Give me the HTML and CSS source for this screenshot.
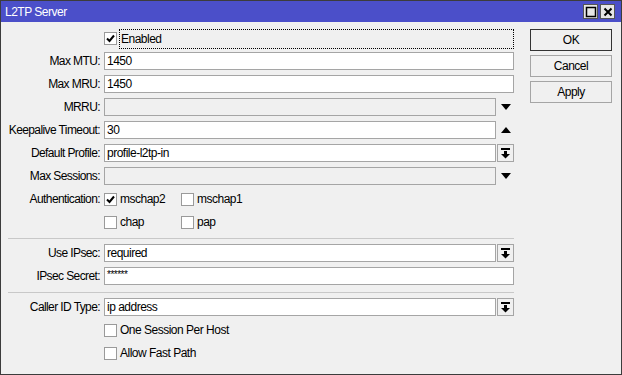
FILE: index.html
```html
<!DOCTYPE html>
<html lang="en">
<head>
    <meta charset="UTF-8">
    <title>L2TP Server</title>
    <link rel="stylesheet" href="styles.css">
</head>
<body>
<div class="window">
    <div class="titlebar">
        <span class="title">L2TP Server</span>
        <div class="win-btns">
            <span class="win-btn">
                <svg width="12" height="12" viewBox="0 0 12 12"><rect x="1.5" y="1.5" width="9" height="9" fill="none" stroke="#000" stroke-width="1.5"/></svg>
            </span>
            <span class="win-btn">
                <svg width="12" height="12" viewBox="0 0 12 12"><path d="M2.5 2.5 L9.5 9.5 M9.5 2.5 L2.5 9.5" stroke="#000" stroke-width="2"/></svg>
            </span>
        </div>
    </div>

    <div class="content">
        <div class="form">
            <span></span>
            <div class="field">
                <span class="check on"></span>
                <span class="focus">Enabled</span>
            </div>

            <label>Max MTU:</label>
            <div class="field"><span class="input">1450</span></div>

            <label>Max MRU:</label>
            <div class="field"><span class="input">1450</span></div>

            <label>MRRU:</label>
            <div class="field"><span class="input disabled"></span><span class="arrow down"></span></div>

            <label>Keepalive Timeout:</label>
            <div class="field"><span class="input">30</span><span class="arrow up"></span></div>

            <label>Default Profile:</label>
            <div class="field"><span class="input">profile-l2tp-in</span><span class="drop"></span></div>

            <label>Max Sessions:</label>
            <div class="field"><span class="input disabled"></span><span class="arrow down"></span></div>

            <label>Authentication:</label>
            <div class="field">
                <span class="opt"><span class="check on"></span>mschap2</span>
                <span class="opt"><span class="check"></span>mschap1</span>
            </div>

            <span></span>
            <div class="field">
                <span class="opt"><span class="check"></span>chap</span>
                <span class="opt"><span class="check"></span>pap</span>
            </div>

            <div class="sep"></div>

            <label>Use IPsec:</label>
            <div class="field"><span class="input">required</span><span class="drop"></span></div>

            <label>IPsec Secret:</label>
            <div class="field"><span class="input secret">******</span></div>

            <div class="sep"></div>

            <label>Caller ID Type:</label>
            <div class="field"><span class="input">ip address</span><span class="drop"></span></div>

            <span></span>
            <div class="field"><span class="opt"><span class="check"></span>One Session Per Host</span></div>

            <span></span>
            <div class="field"><span class="opt"><span class="check"></span>Allow Fast Path</span></div>
        </div>

        <div class="buttons">
            <button class="default">OK</button>
            <button>Cancel</button>
            <button>Apply</button>
        </div>
    </div>
</div>
</body>
</html>
```

FILE: styles.css
```css
body {
    margin: 0;
    font-family: "Liberation Sans", Arial, sans-serif;
    font-size: 12px;
    letter-spacing: -0.5px;
    color: #000;
}

.window {
    width: 622px;
    height: 375px;
    box-sizing: border-box;
    border: 1px solid #3c3c3c;
    background-color: #f0f0f0;
}

.titlebar {
    height: 21px;
    background-color: #4b4fc9;
    display: flex;
    align-items: center;
    justify-content: space-between;
    padding: 0 6px 0 4px;
}

.title {
    color: #fff;
    font-size: 12px;
}

.win-btns {
    display: flex;
    gap: 2px;
}

.win-btn {
    width: 13px;
    height: 13px;
    background-color: #e6e6e6;
    border: 1px solid #555;
    display: flex;
    align-items: center;
    justify-content: center;
}

.content {
    display: flex;
    padding: 7px 0 0 7px;
}

.form {
    display: grid;
    grid-template-columns: 93px 410px;
    column-gap: 3px;
    row-gap: 5px;
    width: 506px;
}

.form label {
    height: 18px;
    line-height: 18px;
    text-align: right;
    white-space: nowrap;
    padding-right: 1px;
    letter-spacing: -0.6px;
}

.field {
    height: 18px;
    display: flex;
    align-items: center;
    gap: 1px;
}

.input {
    flex: 1;
    height: 18px;
    box-sizing: border-box;
    border: 1px solid #a5a5a5;
    background-color: #fff;
    line-height: 16px;
    padding-left: 2px;
    white-space: nowrap;
}

.input.disabled {
    background-color: #f0f0f0;
}

.input.secret {
    font-size: 10px;
    line-height: 14px;
}

.arrow {
    width: 17px;
    height: 18px;
    position: relative;
}

.arrow::after {
    content: "";
    position: absolute;
    left: 4px;
    top: 6px;
    border-left: 5px solid transparent;
    border-right: 5px solid transparent;
}

.arrow.down::after {
    border-top: 6px solid #000;
}

.arrow.up::after {
    border-bottom: 6px solid #000;
}

.drop {
    width: 17px;
    height: 18px;
    box-sizing: border-box;
    border: 1px solid #a5a5a5;
    background-color: #f0f0f0;
    background-image: url("data:image/svg+xml,%3Csvg xmlns='http://www.w3.org/2000/svg' width='15' height='16'%3E%3Crect x='3' y='3' width='9' height='2' fill='black'/%3E%3Crect x='6' y='6' width='3' height='3' fill='black'/%3E%3Cpath d='M3 9 H12 L7.5 13.5 Z' fill='black'/%3E%3C/svg%3E");
    background-repeat: no-repeat;
}

.check {
    width: 13px;
    height: 13px;
    box-sizing: border-box;
    border: 1px solid #9a9a9a;
    background-color: #fff;
    flex: none;
    margin-right: 3px;
}

.check.on {
    background-image: url("data:image/svg+xml,%3Csvg xmlns='http://www.w3.org/2000/svg' width='11' height='11'%3E%3Cpath d='M2 5.5 L4.5 8 L9 2.5' fill='none' stroke='black' stroke-width='2'/%3E%3C/svg%3E");
    background-repeat: no-repeat;
}

.focus {
    flex: 1;
    height: 20px;
    box-sizing: border-box;
    border: 1px dotted #000;
    line-height: 18px;
    margin: 0 0 -2px -2px;
    align-self: flex-start;
    padding-left: 1px;
}

.opt {
    display: flex;
    align-items: center;
    width: 76px;
    white-space: nowrap;
}

.sep {
    grid-column: 1 / 3;
    height: 4px;
    box-sizing: border-box;
    border-bottom: 1px solid #c8c8c8;
    margin-top: -1px;
}

.buttons {
    display: flex;
    flex-direction: column;
    gap: 4px;
    margin-left: 16px;
}

button {
    width: 82px;
    height: 22px;
    box-sizing: border-box;
    border: 1px solid #a5a5a5;
    background-color: #f0f0f0;
    font-family: inherit;
    font-size: 12px;
    letter-spacing: -0.5px;
    padding: 0;
    color: #000;
}

button.default {
    border-color: #333;
}
```
